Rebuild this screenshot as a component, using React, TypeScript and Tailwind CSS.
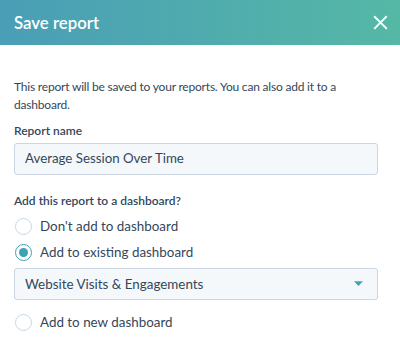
import React, { useState } from "react";

const options = [
  { id: "none", label: "Don't add to dashboard" },
  { id: "existing", label: "Add to existing dashboard" },
  { id: "new", label: "Add to new dashboard" },
];

function Radio({ checked }: { checked: boolean }) {
  return (
    <span
      className={`flex h-[17px] w-[17px] flex-shrink-0 items-center justify-center rounded-full border bg-white ${
        checked ? "border-[#3ea3b7]" : "border-[#cbd6e2]"
      }`}
    >
      {checked && <span className="h-[9px] w-[9px] rounded-full bg-[#3ea3b7]" />}
    </span>
  );
}

export default function App() {
  const [choice, setChoice] = useState("existing");

  return (
    <div className="h-[343px] w-[400px] overflow-hidden bg-white text-[#33475b] [font-family:Lato,'Noto_Sans',sans-serif]">
      <div className="flex h-[45px] items-center justify-between bg-gradient-to-r from-[#4a9eb6] to-[#55b8a5] pl-[14px] pr-[8px]">
        <h2 className="text-[16.8px] font-semibold text-white">Save report</h2>
        <button className="p-1 text-white">
          <svg width="15" height="15" viewBox="0 0 16 16" fill="none" stroke="currentColor" strokeWidth="2" strokeLinecap="square">
            <path d="M2 2l12 12M14 2L2 14" />
          </svg>
        </button>
      </div>

      <div className="px-[14px] pt-[33px]">
        <p className="text-[12px] leading-[18px] tracking-[-0.2px]">
          This report will be saved to your reports. You can also add it to a dashboard.
        </p>

        <label className="mt-[8px] block text-[12px] font-semibold leading-[18px]">Report name</label>
        <div className="mt-[3px] flex h-[32px] w-[364px] items-center rounded-[3px] border border-[#cbd6e2] bg-[#f5f8fa] px-[10px] text-[13.3px]">
          Average Session Over Time
        </div>

        <p className="mt-[17px] text-[12px] font-semibold leading-[18px]">Add this report to a dashboard?</p>

        <div className="mt-[3px]">
          {options.map((o) => (
            <React.Fragment key={o.id}>
              <button
                onClick={() => setChoice(o.id)}
                className={`flex h-[26px] items-center gap-[8px] pl-[1px] text-[13.4px] ${o.id === "new" ? "mt-[9px]" : ""}`}
              >
                <Radio checked={choice === o.id} />
                <span>{o.label}</span>
              </button>
              {o.id === "existing" && (
                <div className="mt-[3px] flex h-[32px] w-[364px] items-center justify-between rounded-[3px] border border-[#cbd6e2] bg-[#f5f8fa] pl-[10px] pr-[14px] text-[13.4px]">
                  <span>Website Visits &amp; Engagements</span>
                  <svg width="9" height="6" viewBox="0 0 11 7">
                    <path d="M0 0h11L5.5 6z" fill="#3ea3b7" />
                  </svg>
                </div>
              )}
            </React.Fragment>
          ))}
        </div>
      </div>
    </div>
  );
}
